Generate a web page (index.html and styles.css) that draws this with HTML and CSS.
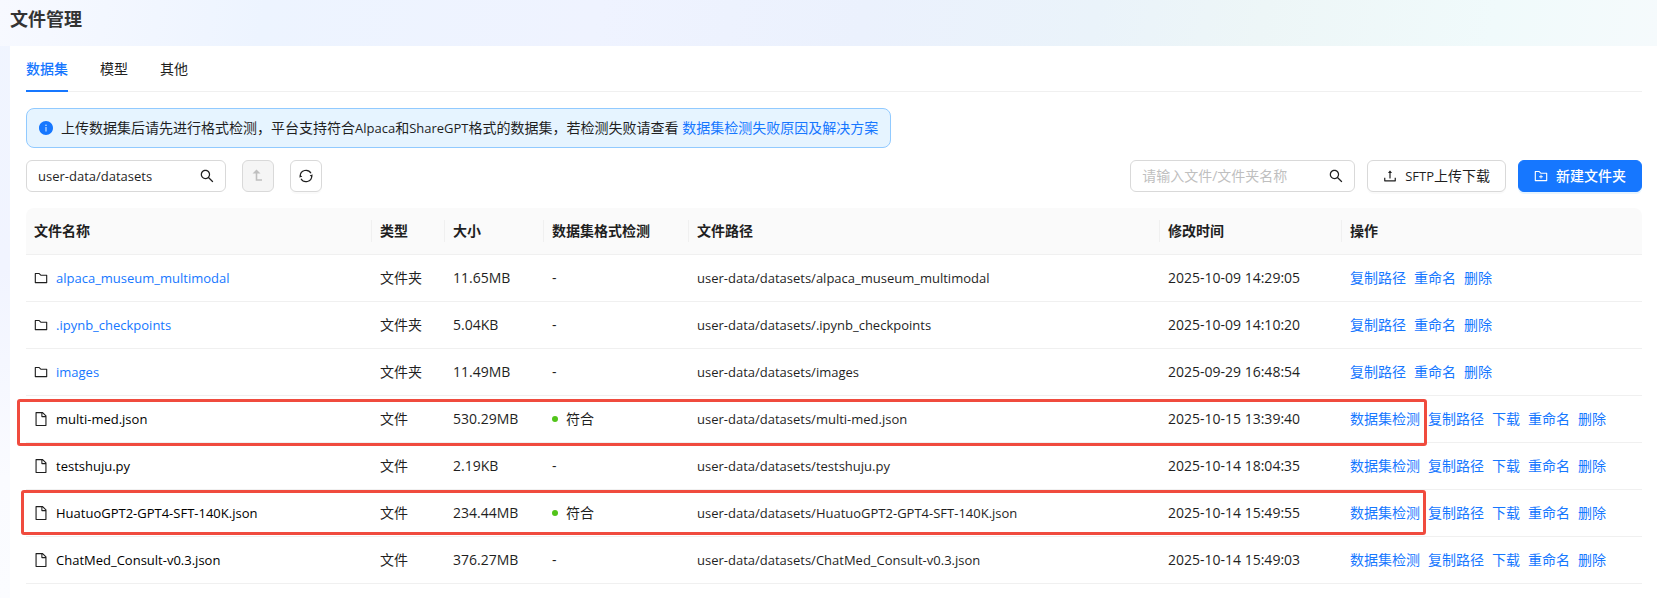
FILE: index.html
```
<!DOCTYPE html>
<html lang="zh-CN">
<head>
<meta charset="utf-8">
<title>文件管理</title>
<link rel="stylesheet" href="styles.css">
</head>
<body>
<svg class="sprite" aria-hidden="true">
  <symbol id="i-search" viewBox="64 64 896 896"><path d="M909.6 854.5L649.9 594.8C690.2 542.7 712 479 712 412c0-80.2-31.3-155.4-87.9-212.1-56.6-56.7-132-87.9-212.1-87.9s-155.5 31.3-212.1 87.9C143.2 256.5 112 331.8 112 412c0 80.1 31.3 155.5 87.9 212.1C256.5 680.8 331.8 712 412 712c67 0 130.6-21.8 182.7-62l259.7 259.6a8.2 8.2 0 0011.6 0l43.6-43.5a8.2 8.2 0 000-11.6zM570.4 570.4C528 612.7 471.8 636 412 636s-116-23.3-158.4-65.6C211.3 528 188 471.8 188 412s23.3-116.1 65.6-158.4C296 211.3 352.2 188 412 188s116.1 23.2 158.4 65.6S636 352.2 636 412s-23.3 116.1-65.6 158.4z"/></symbol>
  <symbol id="i-folder" viewBox="64 64 896 896"><path d="M880 298.4H521L403.7 186.2a8.15 8.15 0 00-5.5-2.2H144c-17.7 0-32 14.3-32 32v592c0 17.7 14.3 32 32 32h736c17.7 0 32-14.3 32-32V330.4c0-17.7-14.3-32-32-32zM840 768H184V256h188.5l119.6 114.4H840V768z"/></symbol>
  <symbol id="i-folder-add" viewBox="64 64 896 896"><path d="M484 443.1V528h-84.5c-4.1 0-7.5 3.1-7.5 7v42c0 3.8 3.4 7 7.5 7H484v84.9c0 3.9 3.2 7.1 7 7.1h42c3.9 0 7-3.2 7-7.1V584h84.5c4.1 0 7.5-3.2 7.5-7v-42c0-3.9-3.4-7-7.5-7H540v-84.9c0-3.9-3.1-7.1-7-7.1h-42c-3.8 0-7 3.2-7 7.1zm396-144.7H521L403.7 186.2a8.15 8.15 0 00-5.5-2.2H144c-17.7 0-32 14.3-32 32v592c0 17.7 14.3 32 32 32h736c17.7 0 32-14.3 32-32V330.4c0-17.7-14.3-32-32-32zM840 768H184V256h188.5l119.6 114.4H840V768z"/></symbol>
  <symbol id="i-file" viewBox="64 64 896 896"><path d="M854.6 288.6L639.4 73.4c-6-6-14.1-9.4-22.6-9.4H192c-17.7 0-32 14.3-32 32v832c0 17.7 14.3 32 32 32h640c17.7 0 32-14.3 32-32V311.3c0-8.5-3.4-16.7-9.4-22.7zM790.2 326H602V137.8L790.2 326zm1.8 562H232V136h302v216a42 42 0 0042 42h216v494z"/></symbol>
  <symbol id="i-upload" viewBox="64 64 896 896"><path d="M400 317.7h73.9V656c0 4.4 3.6 8 8 8h60c4.4 0 8-3.6 8-8V317.7H624c6.7 0 10.4-7.7 6.3-12.9L518.3 163a8 8 0 00-12.6 0l-112 141.7c-4.1 5.3-.4 13 6.3 13zM878 626h-60c-4.4 0-8 3.6-8 8v154H214V634c0-4.4-3.6-8-8-8h-60c-4.4 0-8 3.6-8 8v198c0 17.7 14.3 32 32 32h684c17.7 0 32-14.3 32-32V634c0-4.4-3.6-8-8-8z"/></symbol>
  <symbol id="i-info" viewBox="64 64 896 896"><path d="M512 64C264.6 64 64 264.6 64 512s200.6 448 448 448 448-200.6 448-448S759.4 64 512 64zm32 664c0 4.4-3.6 8-8 8h-48c-4.4 0-8-3.6-8-8V456c0-4.4 3.6-8 8-8h48c4.4 0 8 3.6 8 8v272zm-32-344a48.01 48.01 0 010-96 48.01 48.01 0 010 96z"/></symbol>
  <symbol id="i-up" viewBox="0 0 14 14"><path d="M5.500 .5L9.500 4.500H1.500zM4.700 4h1.600v6.200H11V11.700H4.700z"/></symbol>
  <symbol id="i-sync" viewBox="0 0 14 14"><path d="M1.200 7A5.800 5.800 0 0 1 12 4.200M12.800 7A5.800 5.800 0 0 1 2 9.800" fill="none" stroke="currentColor" stroke-width="1.200"/><path d="M13.800 5.400L12.900 8.300 10.700 6.200zM.2 8.600L1.100 5.700 3.300 7.800z"/></symbol>
</svg>

<header class="page-head"><h1 class="page-title">文件管理</h1></header>

<main class="panel">
  <nav class="tabs" role="tablist">
    <button class="tab tab-active" role="tab" aria-selected="true">数据集</button>
    <button class="tab" role="tab" aria-selected="false">模型</button>
    <button class="tab" role="tab" aria-selected="false">其他</button>
  </nav>

  <div class="alert" role="note">
    <svg class="icon alert-icon"><use href="#i-info"/></svg>
    <p class="alert-text">上传数据集后请先进行格式检测，平台支持符合<span class="latin">Alpaca</span>和<span class="latin">ShareGPT</span>格式的数据集，若检测失败请查看 <a class="link" href="#">数据集检测失败原因及解决方案</a></p>
  </div>

  <div class="toolbar">
    <div class="field field-path">
      <input class="field-input latin" type="text" value="user-data/datasets" aria-label="路径">
      <button class="field-btn" aria-label="前往"><svg class="icon"><use href="#i-search"/></svg></button>
    </div>
    <button class="btn btn-icon" disabled aria-label="上一级"><svg class="icon"><use href="#i-up"/></svg></button>
    <button class="btn btn-icon" aria-label="刷新"><svg class="icon"><use href="#i-sync"/></svg></button>
    <div class="toolbar-right">
      <div class="field field-search">
        <input class="field-input" type="text" placeholder="请输入文件/文件夹名称" aria-label="搜索文件">
        <button class="field-btn" aria-label="搜索"><svg class="icon"><use href="#i-search"/></svg></button>
      </div>
      <button class="btn"><svg class="icon"><use href="#i-upload"/></svg><span><span class="latin">SFTP</span>上传下载</span></button>
      <button class="btn btn-primary"><svg class="icon"><use href="#i-folder-add"/></svg>新建文件夹</button>
    </div>
  </div>

  <div class="table-wrap">
    <table class="files">
      <colgroup>
        <col class="c-name"><col class="c-type"><col class="c-size"><col class="c-check"><col class="c-path"><col class="c-time"><col class="c-ops">
      </colgroup>
      <thead>
        <tr><th>文件名称</th><th>类型</th><th>大小</th><th>数据集格式检测</th><th>文件路径</th><th>修改时间</th><th>操作</th></tr>
      </thead>
      <tbody>
        <tr>
          <td><div class="name"><svg class="icon"><use href="#i-folder"/></svg><a class="link latin" href="#">alpaca_museum_multimodal</a></div></td>
          <td>文件夹</td><td>11.65MB</td><td>-</td><td class="latin">user-data/datasets/alpaca_museum_multimodal</td><td>2025-10-09 14:29:05</td>
          <td><div class="ops"><a class="link" href="#">复制路径</a><a class="link" href="#">重命名</a><a class="link" href="#">删除</a></div></td>
        </tr>
        <tr>
          <td><div class="name"><svg class="icon"><use href="#i-folder"/></svg><a class="link latin" href="#">.ipynb_checkpoints</a></div></td>
          <td>文件夹</td><td>5.04KB</td><td>-</td><td class="latin">user-data/datasets/.ipynb_checkpoints</td><td>2025-10-09 14:10:20</td>
          <td><div class="ops"><a class="link" href="#">复制路径</a><a class="link" href="#">重命名</a><a class="link" href="#">删除</a></div></td>
        </tr>
        <tr>
          <td><div class="name"><svg class="icon"><use href="#i-folder"/></svg><a class="link latin" href="#">images</a></div></td>
          <td>文件夹</td><td>11.49MB</td><td>-</td><td class="latin">user-data/datasets/images</td><td>2025-09-29 16:48:54</td>
          <td><div class="ops"><a class="link" href="#">复制路径</a><a class="link" href="#">重命名</a><a class="link" href="#">删除</a></div></td>
        </tr>
        <tr>
          <td><div class="name"><svg class="icon"><use href="#i-file"/></svg><span class="file latin">multi-med.json</span></div></td>
          <td>文件</td><td>530.29MB</td><td><span class="status">符合</span></td><td class="latin">user-data/datasets/multi-med.json</td><td>2025-10-15 13:39:40</td>
          <td><div class="ops"><a class="link" href="#">数据集检测</a><a class="link" href="#">复制路径</a><a class="link" href="#">下载</a><a class="link" href="#">重命名</a><a class="link" href="#">删除</a></div></td>
        </tr>
        <tr>
          <td><div class="name"><svg class="icon"><use href="#i-file"/></svg><span class="file latin">testshuju.py</span></div></td>
          <td>文件</td><td>2.19KB</td><td>-</td><td class="latin">user-data/datasets/testshuju.py</td><td>2025-10-14 18:04:35</td>
          <td><div class="ops"><a class="link" href="#">数据集检测</a><a class="link" href="#">复制路径</a><a class="link" href="#">下载</a><a class="link" href="#">重命名</a><a class="link" href="#">删除</a></div></td>
        </tr>
        <tr>
          <td><div class="name"><svg class="icon"><use href="#i-file"/></svg><span class="file latin">HuatuoGPT2-GPT4-SFT-140K.json</span></div></td>
          <td>文件</td><td>234.44MB</td><td><span class="status">符合</span></td><td class="latin">user-data/datasets/HuatuoGPT2-GPT4-SFT-140K.json</td><td>2025-10-14 15:49:55</td>
          <td><div class="ops"><a class="link" href="#">数据集检测</a><a class="link" href="#">复制路径</a><a class="link" href="#">下载</a><a class="link" href="#">重命名</a><a class="link" href="#">删除</a></div></td>
        </tr>
        <tr>
          <td><div class="name"><svg class="icon"><use href="#i-file"/></svg><span class="file latin">ChatMed_Consult-v0.3.json</span></div></td>
          <td>文件</td><td>376.27MB</td><td>-</td><td class="latin">user-data/datasets/ChatMed_Consult-v0.3.json</td><td>2025-10-14 15:49:03</td>
          <td><div class="ops"><a class="link" href="#">数据集检测</a><a class="link" href="#">复制路径</a><a class="link" href="#">下载</a><a class="link" href="#">重命名</a><a class="link" href="#">删除</a></div></td>
        </tr>
      </tbody>
    </table>
    <div class="mark mark-first"></div>
    <div class="mark mark-second"></div>
  </div>
</main>
</body>
</html>
```

FILE: styles.css
```
* { box-sizing: border-box; }

body {
  margin: 0;
  min-height: 100vh;
  display: flex;
  flex-direction: column;
  padding-left: 10px;
  background:
    linear-gradient(100deg, #f7f9ff 0%, #edf4ff 16%, #eff3ff 36%, #ebf1fd 52%, #eaf3fa 66%, #edf6f7 76%, #f0fafb 90%, #f5fafc 100%) top / 100% 46px no-repeat,
    linear-gradient(180deg, #f0f5ff 0%, #f1f4ff 45%, #fafbff 80%, #fbfcff 100%);
  color: #1f1f1f;
  font-family: "Open Sans", "Noto Sans CJK SC", sans-serif;
  font-size: 14px;
  line-height: 22px;
}

.sprite { position: absolute; width: 0; height: 0; }

.icon {
  flex: none;
  width: 14px;
  height: 14px;
  fill: currentColor;
}

.link { color: #1677ff; text-decoration: none; }

.page-head { padding: 6px 0 14px; }

.page-title {
  margin: 0;
  color: #333;
  font-size: 18px;
  font-weight: 700;
  line-height: 26px;
}

.panel {
  flex: 1;
  padding: 0 15px 0 16px;
  background: #fff;
}

.tabs {
  display: flex;
  gap: 32px;
  box-shadow: inset 0 -1px #f0f0f0;
}

.tab {
  padding: 12px 0;
  border: 0;
  background: none;
  color: inherit;
  font: inherit;
}

.tab-active {
  color: #1677ff;
  font-weight: 500;
  box-shadow: inset 0 -2px #1677ff;
}

.alert {
  display: flex;
  align-items: center;
  gap: 8px;
  width: fit-content;
  margin-top: 16px;
  padding: 8px 12px;
  border: 1px solid #91caff;
  border-radius: 8px;
  background: #e6f4ff;
}

.alert-icon { color: #1677ff; }

.alert-text { margin: 0; }

.toolbar {
  display: flex;
  align-items: center;
  gap: 16px;
  margin-top: 12px;
}

.toolbar-right {
  display: flex;
  gap: 12px;
  margin-left: auto;
}

.field {
  display: flex;
  align-items: center;
  height: 32px;
  padding: 0 11px;
  border: 1px solid #d9d9d9;
  border-radius: 6px;
  background: #fff;
}

.field-path { width: 200px; }

.field-search { width: 225px; }

.field-input {
  flex: 1;
  min-width: 0;
  padding: 0;
  border: 0;
  outline: 0;
  background: none;
  color: inherit;
  font: inherit;
}

.field-input::placeholder { color: #bfbfbf; }

.field-btn {
  display: flex;
  padding: 0;
  border: 0;
  background: none;
  color: inherit;
}

.btn {
  display: flex;
  align-items: center;
  justify-content: center;
  gap: 8px;
  height: 32px;
  padding: 0 15px;
  border: 1px solid #d9d9d9;
  border-radius: 6px;
  background: #fff;
  box-shadow: 0 2px 0 rgba(0, 0, 0, 0.02);
  color: inherit;
  font: inherit;
}

.btn-icon { width: 32px; padding: 0; }

.btn:disabled {
  background: #f5f5f5;
  color: #bfbfbf;
  box-shadow: none;
}

.btn-primary {
  border-color: #1677ff;
  background: #1677ff;
  box-shadow: 0 2px 0 rgba(5, 145, 255, 0.1);
  color: #fff;
  font-weight: 500;
}

.table-wrap {
  position: relative;
  margin-top: 16px;
}

.files {
  width: 100%;
  table-layout: fixed;
  border-collapse: separate;
  border-spacing: 0;
}

.c-name { width: 346px; }
.c-type { width: 73px; }
.c-size { width: 99px; }
.c-check { width: 145px; }
.c-time { width: 182px; }
.c-ops { width: 300px; }

.files th,
.files td {
  padding: 12px 8px;
  border-bottom: 1px solid #f0f0f0;
  text-align: left;
  white-space: nowrap;
}

.files th {
  position: relative;
  background: #fafafa;
  font-weight: 700;
}

.files th:first-child { border-top-left-radius: 8px; }
.files th:last-child { border-top-right-radius: 8px; }

.files th:not(:last-child)::after {
  content: "";
  position: absolute;
  top: 12px;
  right: 0;
  width: 1px;
  height: 22px;
  background: #f0f0f0;
}

.name {
  display: flex;
  align-items: center;
  gap: 8px;
}

.latin { font-size: 13px; }

.file { color: #000; }

.ops {
  display: flex;
  gap: 8px;
}

.status {
  display: flex;
  align-items: center;
  gap: 8px;
}

.status::before {
  content: "";
  width: 6px;
  height: 6px;
  border-radius: 50%;
  background: #52c41a;
}

/* Hand-drawn highlight frames laid over the rows */
.mark {
  position: absolute;
  border: 3px solid #f04b3e;
  border-radius: 3px;
  pointer-events: none;
}

.mark-first {
  top: 191px;
  left: -9px;
  right: 215px;
  height: 47px;
}

.mark-second {
  top: 282px;
  left: -5px;
  right: 216px;
  height: 45px;
}
```
